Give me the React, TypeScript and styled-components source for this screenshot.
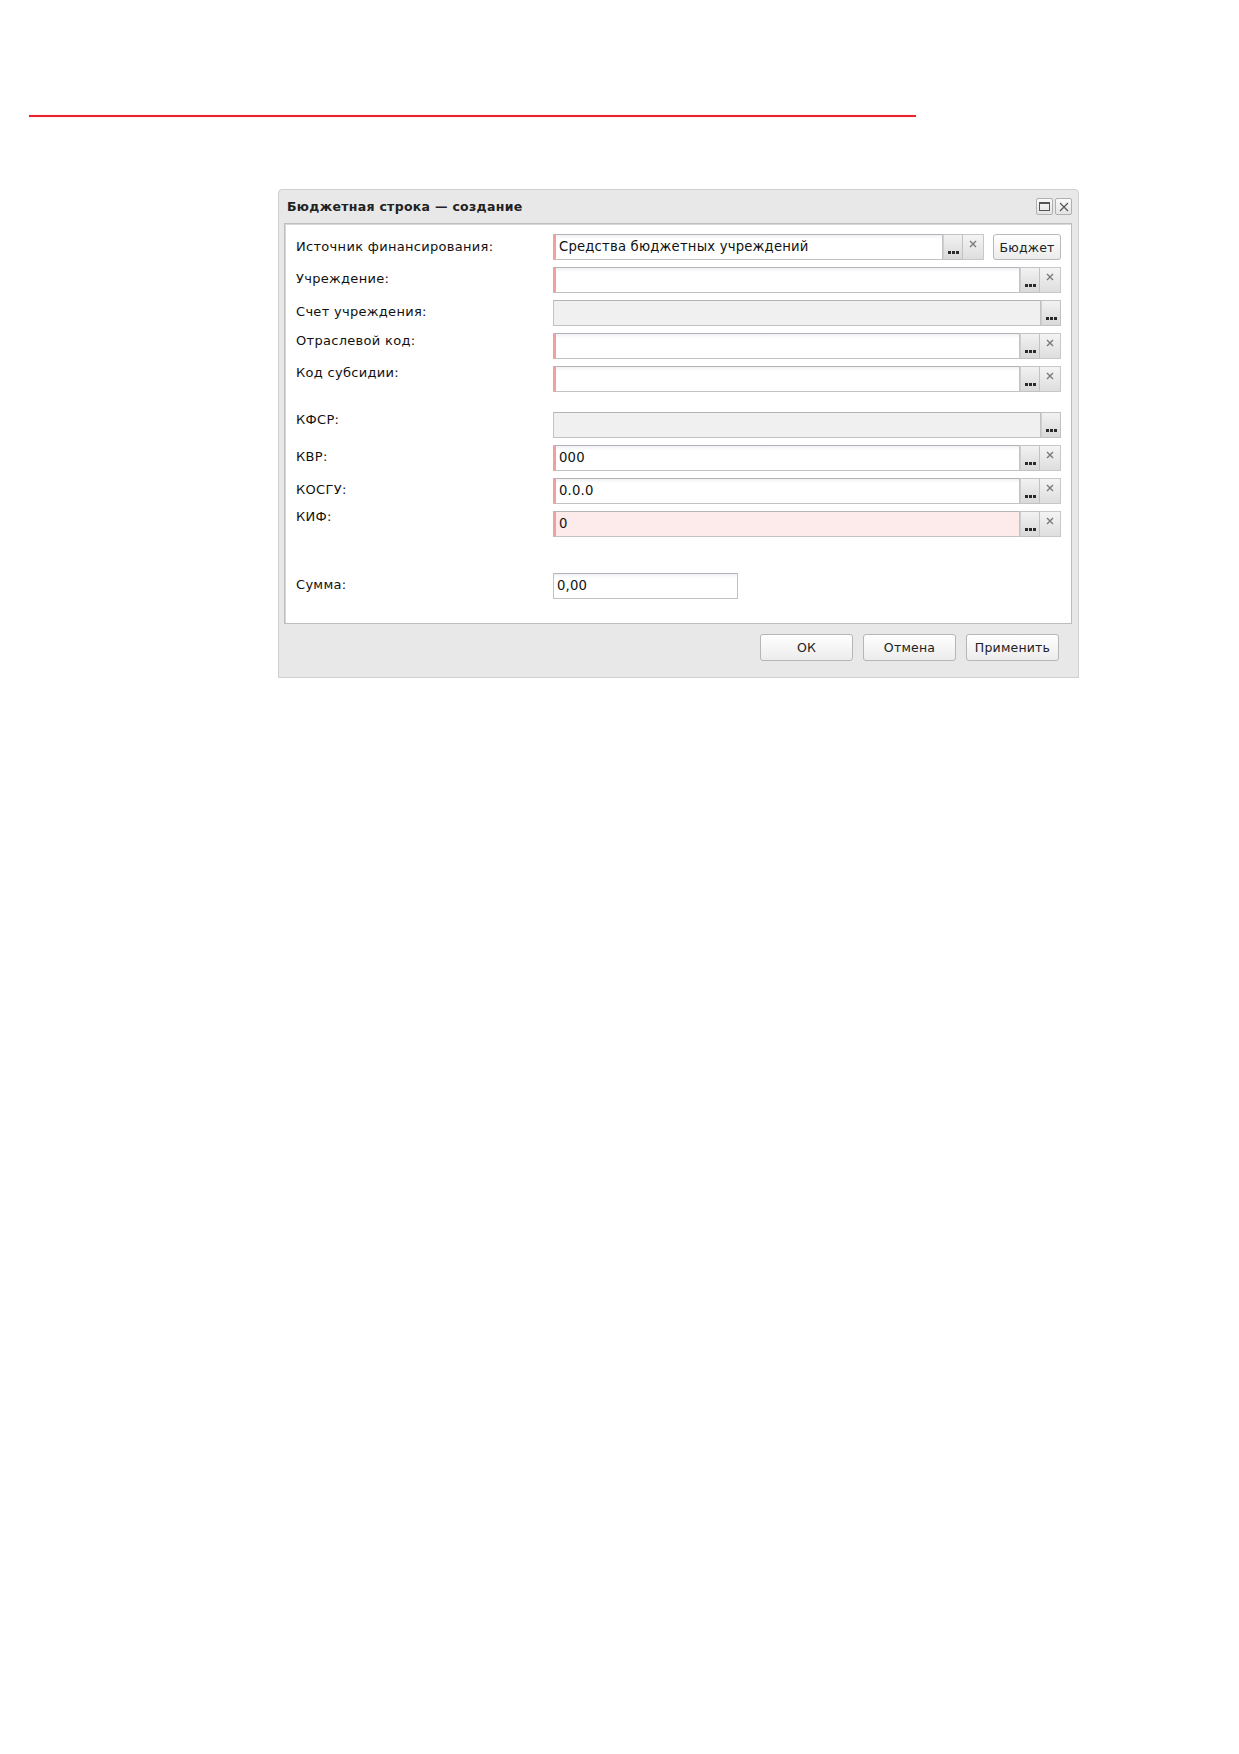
import React from "react";
import styled, { createGlobalStyle } from "styled-components";

const Global = createGlobalStyle`
  html, body { margin: 0; padding: 0; background: #ffffff; }
  body { font-family: "DejaVu Sans", "Liberation Sans", sans-serif; color: #000; }
`;

const Page = styled.div`
  width: 1239px;
  min-height: 1754px;
  padding-top: 115px;
  box-sizing: border-box;
`;

const RedRule = styled.div`
  margin-left: 29px;
  width: 887px;
  height: 2px;
  background: #e8232a;
  box-shadow: 0 0 1px rgba(232, 35, 42, 0.6);
`;

const Dialog = styled.div`
  margin: 72px 0 0 278px;
  width: 801px;
  border: 1px solid #cfcfcf;
  border-radius: 4px 4px 0 0;
  background: #e8e8e8;
  box-sizing: border-box;
`;

const TitleBar = styled.div`
  height: 33px;
  display: flex;
  align-items: center;
  justify-content: space-between;
  padding: 0 6px 0 8px;
`;

const Title = styled.div`
  font-weight: bold;
  font-size: 12.5px;
  letter-spacing: 0.3px;
  color: #222;
`;

const TitleTools = styled.div`
  display: flex;
  gap: 2px;
`;

const ToolButton = styled.div`
  width: 17px;
  height: 17px;
  border: 1px solid #b0b0b0;
  border-radius: 2px;
  background: linear-gradient(#fafafa, #e4e4e4);
  display: flex;
  align-items: center;
  justify-content: center;
  box-sizing: border-box;
`;

const Body = styled.div`
  margin: 0 6px 0 5px;
  background: #ffffff;
  border: 1px solid #bdbdbd;
  box-shadow: inset 1px 1px 0 #d8d8d8;
  padding: 10px 10px 24px 11px;
  display: flex;
  flex-direction: column;
`;

const Row = styled.div<{ $gap: number }>`
  display: grid;
  grid-template-columns: 257px 1fr;
  margin-top: ${(p) => p.$gap}px;
  height: 26px;
`;

const Label = styled.div<{ $lift: number }>`
  font-size: 13px;
  line-height: 16px;
  letter-spacing: 0.3px;
  margin-top: ${(p) => p.$lift}px;
  color: #111;
  white-space: nowrap;
`;

const FieldLine = styled.div`
  display: flex;
  align-items: stretch;
  height: 26px;
`;

const Field = styled.div<{ $required?: boolean; $disabled?: boolean; $invalid?: boolean; $width?: number }>`
  flex: ${(p) => (p.$width ? "0 0 auto" : "1 1 auto")};
  width: ${(p) => (p.$width ? `${p.$width}px` : "auto")};
  box-sizing: border-box;
  border: 1px solid #c2c2c2;
  border-top-color: #b4b4b8;
  border-left: ${(p) => (p.$required ? "3px solid #f0a0a0" : "1px solid #c2c2c2")};
  background: ${(p) =>
    p.$disabled
      ? "#f0f0f0"
      : p.$invalid
      ? "#fdeaea"
      : "linear-gradient(#eef0f2 0px, #ffffff 4px, #ffffff 100%)"};
  font-size: 13.2px;
  letter-spacing: 0.2px;
  line-height: 24px;
  padding-left: 3px;
  color: #111;
  white-space: nowrap;
  overflow: hidden;
`;

const TriggerButton = styled.div`
  flex: 0 0 20px;
  box-sizing: border-box;
  border: 1px solid #c2c2c2;
  border-left: 1px solid #d0d0d0;
  background: linear-gradient(#f2f2f2, #d9d9d9);
  display: flex;
  align-items: flex-end;
  justify-content: center;
  padding-bottom: 5px;
`;

const Dots = styled.div`
  display: flex;
  gap: 1px;
`;

const Dot = styled.span`
  width: 3px;
  height: 3px;
  background: #2a2a2a;
`;

const ClearButton = styled.div`
  flex: 0 0 21px;
  box-sizing: border-box;
  border: 1px solid #c8c8c8;
  border-left: none;
  background: linear-gradient(#f4f4f4, #dedede);
  display: flex;
  justify-content: center;
  padding-top: 5px;
`;

const SideButton = styled.div`
  margin-left: 9px;
  width: 68px;
  height: 26px;
  box-sizing: border-box;
  border: 1px solid #b8b8b8;
  border-radius: 3px;
  background: linear-gradient(#ffffff, #ebebeb);
  font-size: 12.5px;
  letter-spacing: 0.2px;
  display: flex;
  align-items: center;
  justify-content: center;
  color: #222;
`;

const Footer = styled.div`
  height: 53px;
  display: flex;
  align-items: center;
  justify-content: flex-end;
  gap: 10px;
  padding: 0 19px 6px 0;
  box-sizing: border-box;
`;

const FooterButton = styled.div`
  width: 93px;
  height: 27px;
  box-sizing: border-box;
  border: 1px solid #b6b6b6;
  border-radius: 3px;
  background: linear-gradient(#ffffff, #ececec);
  font-size: 12.5px;
  letter-spacing: 0.2px;
  display: flex;
  align-items: center;
  justify-content: center;
  color: #222;
`;

const Cross = () => (
  <svg width="8" height="8" viewBox="0 0 8 8">
    <path d="M1 1 L7 7 M7 1 L1 7" stroke="#7a7a7a" strokeWidth="1.4" />
  </svg>
);

const Ellipsis = () => (
  <Dots>
    <Dot />
    <Dot />
    <Dot />
  </Dots>
);

type RowDef = {
  label: string;
  gap: number;
  lift: number;
  value?: string;
  required?: boolean;
  disabled?: boolean;
  invalid?: boolean;
  clear?: boolean;
  trigger?: boolean;
  width?: number;
  extra?: string;
};

const rows: RowDef[] = [
  { label: "Источник финансирования:", gap: 0, lift: 5, value: "Средства бюджетных учреждений", required: true, trigger: true, clear: true, extra: "Бюджет" },
  { label: "Учреждение:", gap: 7, lift: 4, required: true, trigger: true, clear: true },
  { label: "Счет учреждения:", gap: 7, lift: 4, disabled: true, trigger: true },
  { label: "Отраслевой код:", gap: 7, lift: 0, required: true, trigger: true, clear: true },
  { label: "Код субсидии:", gap: 7, lift: -1, required: true, trigger: true, clear: true },
  { label: "КФСР:", gap: 20, lift: 0, disabled: true, trigger: true },
  { label: "КВР:", gap: 7, lift: 4, value: "000", required: true, trigger: true, clear: true },
  { label: "КОСГУ:", gap: 7, lift: 4, value: "0.0.0", required: true, trigger: true, clear: true },
  { label: "КИФ:", gap: 7, lift: -2, value: "0", required: true, invalid: true, trigger: true, clear: true },
  { label: "Сумма:", gap: 36, lift: 4, value: "0,00", width: 185 },
];

export default function App() {
  return (
    <Page>
      <Global />
      <RedRule />
      <Dialog>
        <TitleBar>
          <Title>Бюджетная строка — создание</Title>
          <TitleTools>
            <ToolButton>
              <svg width="11" height="9" viewBox="0 0 11 9">
                <rect x="0.5" y="0.5" width="10" height="8" fill="none" stroke="#555" />
                <line x1="0.5" y1="1.5" x2="10.5" y2="1.5" stroke="#555" />
              </svg>
            </ToolButton>
            <ToolButton>
              <svg width="10" height="10" viewBox="0 0 10 10">
                <path d="M1 1 L9 9 M9 1 L1 9" stroke="#555" strokeWidth="1.2" />
              </svg>
            </ToolButton>
          </TitleTools>
        </TitleBar>
        <Body>
          {rows.map((r) => (
            <Row key={r.label} $gap={r.gap}>
              <Label $lift={r.lift}>{r.label}</Label>
              <FieldLine>
                <Field $required={r.required} $disabled={r.disabled} $invalid={r.invalid} $width={r.width}>
                  {r.value ?? ""}
                </Field>
                {r.trigger && (
                  <TriggerButton>
                    <Ellipsis />
                  </TriggerButton>
                )}
                {r.clear && (
                  <ClearButton>
                    <Cross />
                  </ClearButton>
                )}
                {r.extra && <SideButton>{r.extra}</SideButton>}
              </FieldLine>
            </Row>
          ))}
        </Body>
        <Footer>
          <FooterButton>ОК</FooterButton>
          <FooterButton>Отмена</FooterButton>
          <FooterButton>Применить</FooterButton>
        </Footer>
      </Dialog>
    </Page>
  );
}
